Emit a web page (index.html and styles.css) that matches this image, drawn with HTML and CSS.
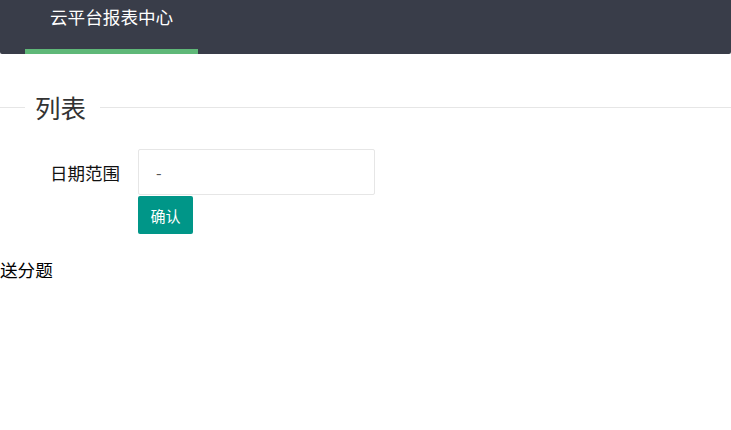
FILE: index.html
```html
<!DOCTYPE html>
<html lang="zh-CN">
<head>
<meta charset="utf-8">
<title>云平台报表中心</title>
<link rel="stylesheet" href="styles.css">
</head>
<body>
<header class="header">
  <nav class="nav">
    <a class="nav-item active" href="#">云平台报表中心</a>
  </nav>
</header>
<fieldset class="field">
  <legend class="legend">列表</legend>
  <form class="form">
    <div class="form-row">
      <label class="form-label">日期范围</label>
      <div class="date-input">-</div>
    </div>
    <div class="form-actions">
      <button type="button" class="btn">确认</button>
    </div>
  </form>
</fieldset>
<p class="note">送分题</p>
</body>
</html>
```

FILE: styles.css
```css
html, body {
  margin: 0;
  padding: 0;
  background: #fff;
}
body {
  font-family: "Noto Sans CJK SC", "Microsoft YaHei", sans-serif;
  color: #000;
}
.header {
  height: 54px;
  background: #393d49;
  border-radius: 0 0 2px 2px;
  padding-left: 25px;
}
.nav {
  display: flex;
  height: 54px;
}
.nav-item {
  position: relative;
  display: block;
  padding: 0 25px;
  font-size: 17.6px;
  line-height: 33px;
  color: #fff;
  text-decoration: none;
  height: 54px;
}
.nav-item.active::after {
  content: "";
  position: absolute;
  left: 0;
  right: 0;
  bottom: 0;
  height: 5px;
  background: #5fb878;
}
.field {
  margin: 41px 0 0;
  padding: 0;
  border: none;
  border-top: 1px solid #e6e6e6;
  min-width: 0;
}
.legend {
  margin-left: 25px;
  padding: 0 14px 0 10px;
  font-size: 25.5px;
  line-height: 24px;
  color: #333;
}
.form {
  padding-top: 30px;
}
.form-row {
  display: flex;
  align-items: center;
}
.form-label {
  width: 120px;
  padding-right: 18px;
  text-align: right;
  font-size: 17.5px;
  color: #111;
}
.date-input {
  box-sizing: border-box;
  width: 237px;
  height: 46px;
  border: 1px solid #e6e6e6;
  border-radius: 2px;
  padding-left: 17px;
  font-size: 16px;
  line-height: 44px;
  color: #555;
}
.form-actions {
  padding-left: 138px;
  margin-top: 1px;
}
.btn {
  display: block;
  width: 55px;
  height: 38px;
  border: none;
  border-radius: 2px;
  background: #009688;
  color: #fff;
  font-family: inherit;
  font-size: 15px;
  padding: 0;
  cursor: pointer;
}
.note {
  margin: 24px 0 0;
  font-size: 17.6px;
  line-height: 24px;
}
```
